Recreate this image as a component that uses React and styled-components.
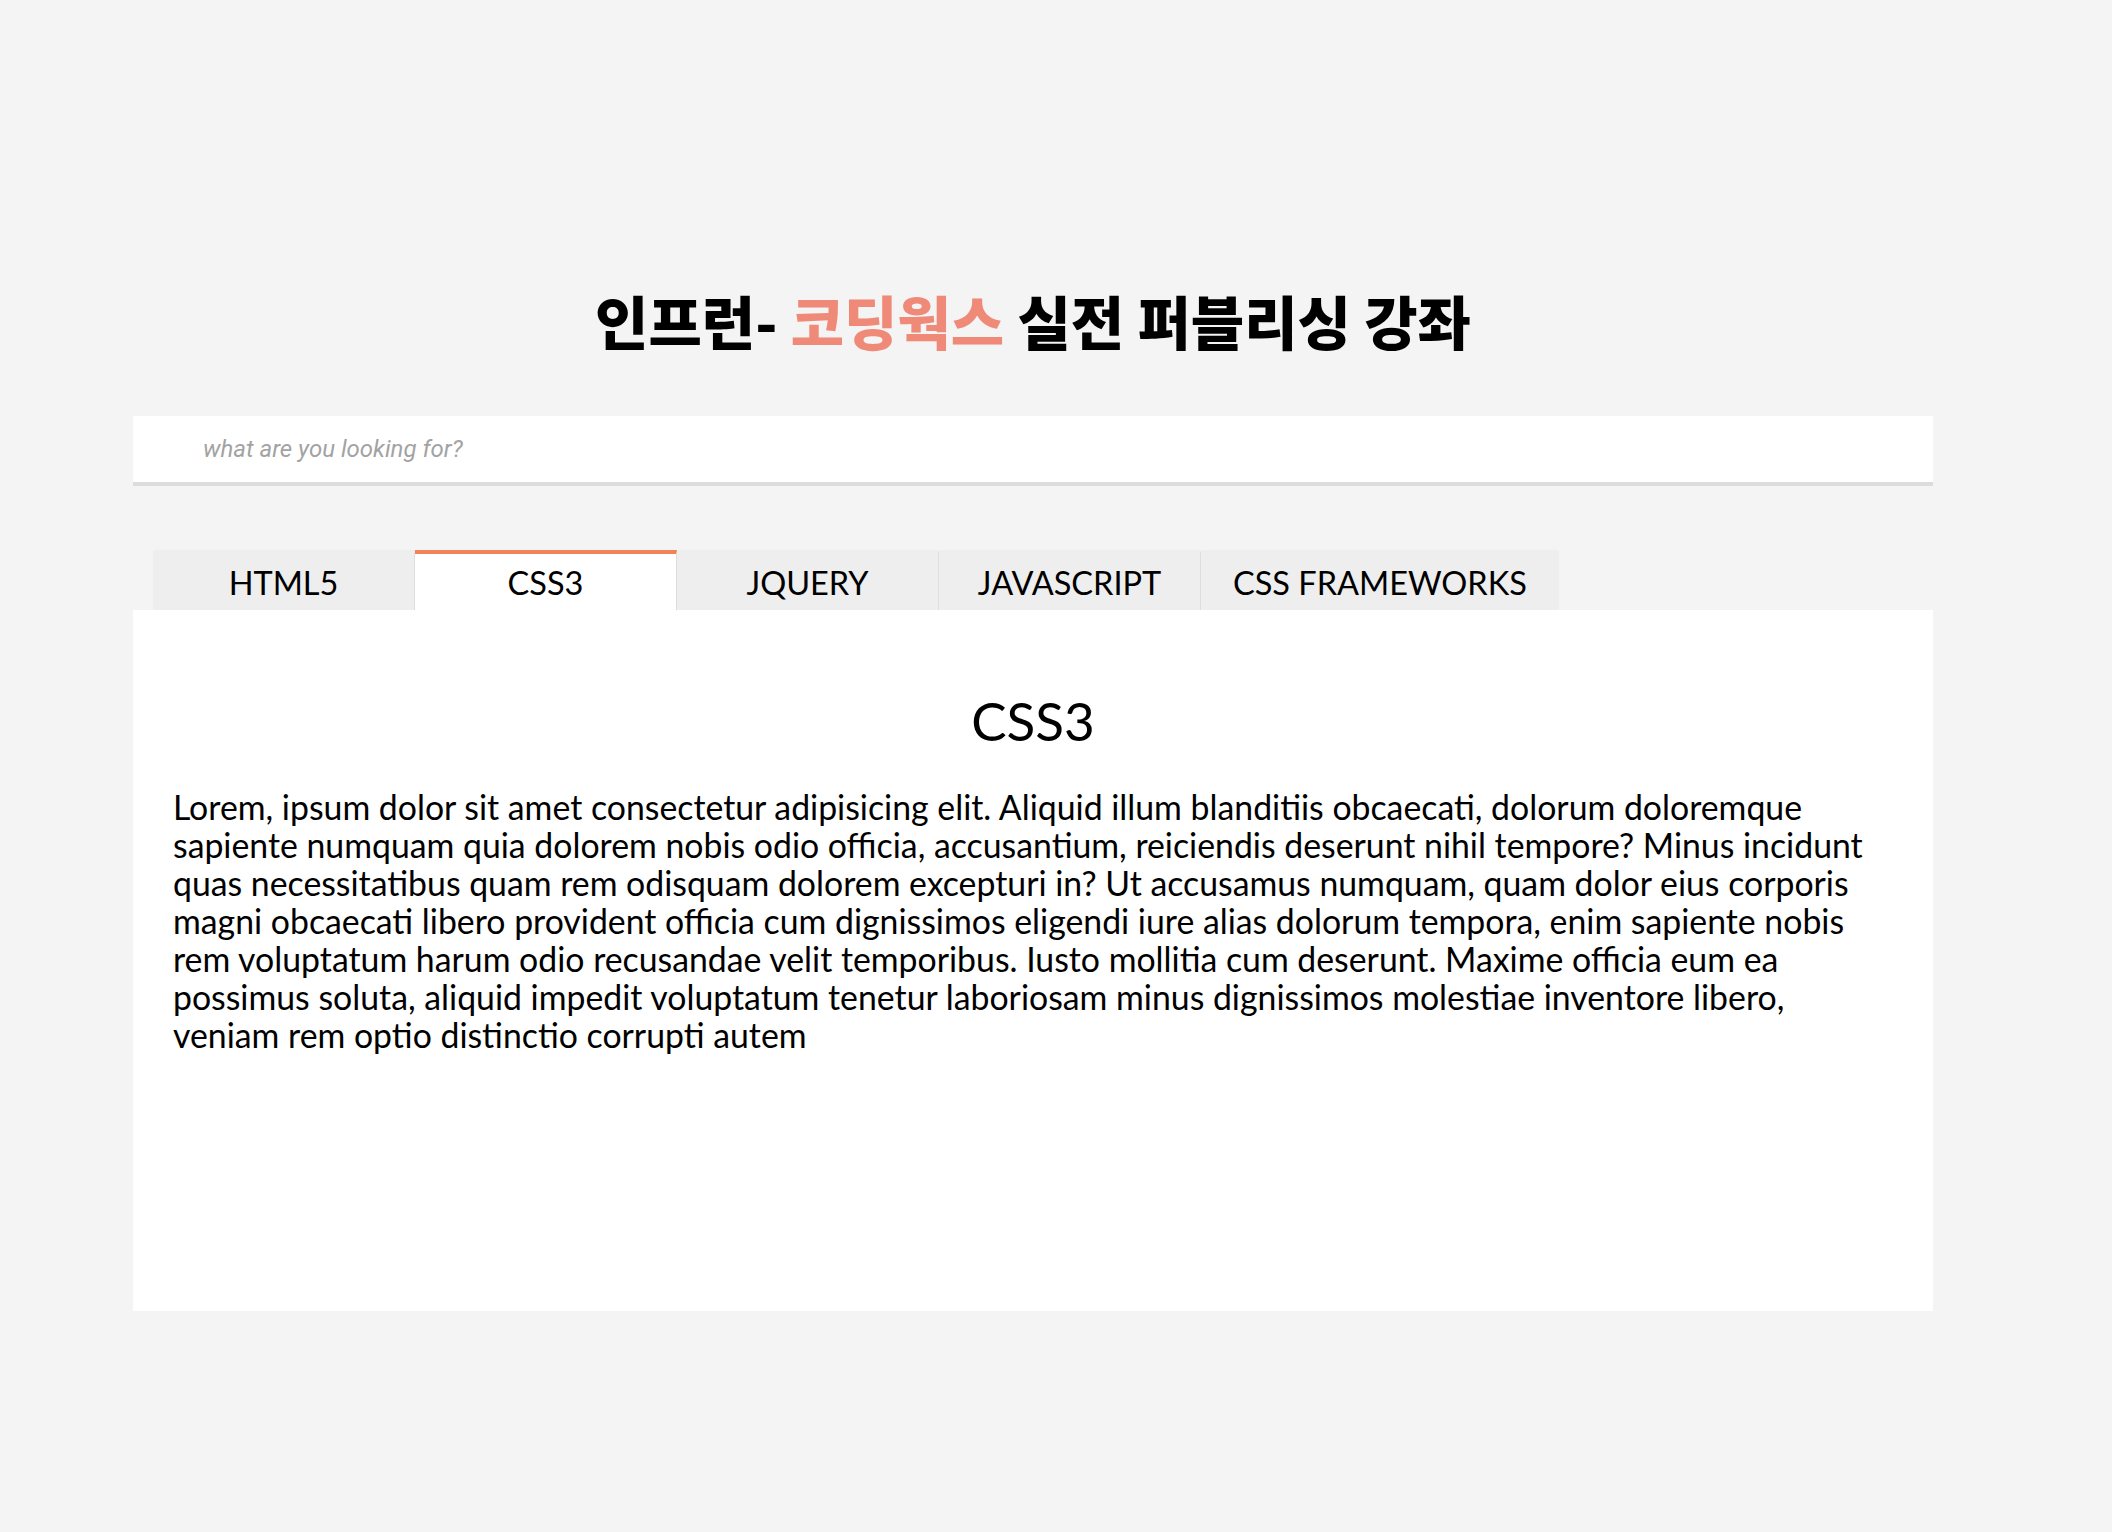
import React, { useState } from 'react';
import styled, { createGlobalStyle } from 'styled-components';

const tabs = [
  { name: 'HTML5', title: 'HTML5' },
  { name: 'CSS3', title: 'CSS3' },
  { name: 'JQUERY', title: 'JQUERY' },
  { name: 'JAVASCRIPT', title: 'JAVASCRIPT' },
  { name: 'CSS FRAMEWORKS', title: 'CSS FRAMEWORKS' },
];

const lorem =
  'Lorem, ipsum dolor sit amet consectetur adipisicing elit. Aliquid illum blanditiis obcaecati, dolorum doloremque sapiente numquam quia dolorem nobis odio officia, accusantium, reiciendis deserunt nihil tempore? Minus incidunt quas necessitatibus quam rem odisquam dolorem excepturi in? Ut accusamus numquam, quam dolor eius corporis magni obcaecati libero provident officia cum dignissimos eligendi iure alias dolorum tempora, enim sapiente nobis rem voluptatum harum odio recusandae velit temporibus. Iusto mollitia cum deserunt. Maxime officia eum ea possimus soluta, aliquid impedit voluptatum tenetur laboriosam minus dignissimos molestiae inventore libero, veniam rem optio distinctio corrupti autem';

const GlobalStyle = createGlobalStyle`
  * { box-sizing: border-box; }
  body {
    margin: 0;
    background: #f4f4f4;
    font-family: Lato, "Noto Sans", sans-serif;
    color: #000;
  }
`;

const Container = styled.div`
  width: 1800px;
  margin-left: 133px;
  padding-top: 280px;
  padding-bottom: 221px;
`;

const Title = styled.h1`
  margin: 0;
  text-align: center;
  font-family: "Noto Sans CJK KR", sans-serif;
  font-size: 58px;
  font-weight: 900;
  line-height: 80px;
`;

const Accent = styled.span`
  color: #ef8a78;
`;

const SearchInput = styled.input`
  display: block;
  width: 100%;
  height: 70px;
  margin-top: 56px;
  padding: 0 0 0 70px;
  border: none;
  border-bottom: 4px solid #dcdcdc;
  background: #fff;
  outline: none;
  font-family: Roboto, sans-serif;
  font-size: 24px;
  font-style: italic;

  &::placeholder {
    color: #a3a3a3;
  }
`;

const TabList = styled.div`
  display: flex;
  margin: 64px 0 0 20px;
`;

const Tab = styled.button`
  min-width: 262px;
  height: 60px;
  padding: 1px 32px 0;
  border: none;
  border-right: 1px solid #dedede;
  border-top: 4px solid ${(p) => (p.$active ? '#f08458' : 'transparent')};
  background: ${(p) => (p.$active ? '#fff' : '#eeeeee')};
  font-family: Lato, sans-serif;
  font-size: 32.5px;
  color: #000;
  cursor: pointer;

  &:last-child {
    border-right: none;
  }
`;

const Panel = styled.div`
  height: 701px;
  background: #fff;
  padding: 81px 40px 0;
`;

const PanelHeading = styled.h2`
  margin: 0 0 37px;
  text-align: center;
  font-size: 53px;
  font-weight: 400;
  line-height: 60px;
`;

const PanelText = styled.p`
  margin: 0;
  font-size: 33.8px;
  line-height: 38px;
`;

export default function App() {
  const [active, setActive] = useState(1);
  return (
    <>
      <GlobalStyle />
      <Container>
        <Title>
          인프런- <Accent>코딩웍스</Accent> 실전 퍼블리싱 강좌
        </Title>
        <SearchInput placeholder="what are you looking for?" />
        <TabList>
          {tabs.map((t, i) => (
            <Tab key={t.name} $active={i === active} onClick={() => setActive(i)}>
              {t.name}
            </Tab>
          ))}
        </TabList>
        <Panel>
          <PanelHeading>{tabs[active].title}</PanelHeading>
          <PanelText>{lorem}</PanelText>
        </Panel>
      </Container>
    </>
  );
}
